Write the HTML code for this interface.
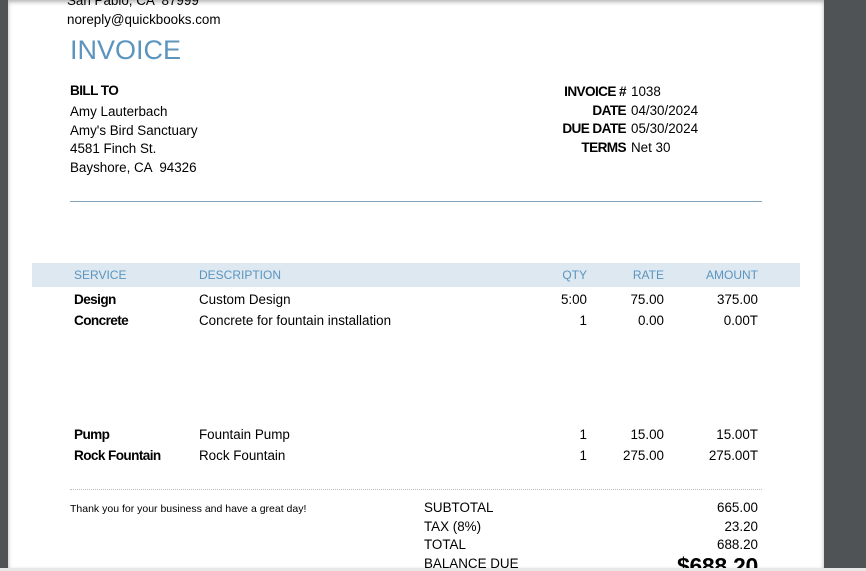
<!DOCTYPE html><html><head><style>
html,body{margin:0;width:866px;height:571px;overflow:hidden}
body{background:#505355;font-family:"Liberation Sans",sans-serif;color:#000;position:relative}
.pg{position:absolute;left:8px;top:0;width:816px;height:568px;background:#fff;box-shadow:0 2px 4px rgba(0,0,0,.3) inset}
.a{position:absolute;white-space:nowrap;font-size:13.4px}
.r{text-align:right}
.b{font-weight:bold;letter-spacing:-0.6px;font-size:13.6px}
.h{color:#5b95bf;font-size:12px}
.bot{position:absolute;left:0;top:568px;width:866px;height:3px;background:#e8e8e8}
</style></head><body>
<div class="pg"></div>
<div class="a" style="left:67px;top:-7px">San Pablo, CA &nbsp;87999</div>
<div class="a" style="left:67px;top:12px">noreply@quickbooks.com</div>
<div class="a" style="left:70px;top:35px;font-size:27px;color:#5b95bf">INVOICE</div>
<div class="a b" style="left:70px;top:83px">BILL TO</div>
<div class="a" style="left:70px;top:103px;line-height:18.5px">Amy Lauterbach<br>Amy's Bird Sanctuary<br>4581 Finch St.<br>Bayshore, CA &nbsp;94326</div>
<div class="a b r" style="left:500px;width:126px;top:83px;line-height:18.5px">INVOICE #<br>DATE<br>DUE DATE<br>TERMS</div>
<div class="a" style="left:631px;top:83px;line-height:18.5px">1038<br>04/30/2024<br>05/30/2024<br>Net 30</div>
<div style="position:absolute;left:70px;top:201px;width:692px;height:1px;background:#8aa5bb"></div>
<div style="position:absolute;left:32px;top:263px;width:768px;height:24px;background:#dde8f0"></div>
<div class="a h" style="left:74px;top:268px">SERVICE</div>
<div class="a h" style="left:199px;top:268px">DESCRIPTION</div>
<div class="a h r" style="left:540px;width:47px;top:268px">QTY</div>
<div class="a h r" style="left:610px;width:54px;top:268px">RATE</div>
<div class="a h r" style="left:680px;width:78px;top:268px">AMOUNT</div>

<div class="a b" style="left:74px;top:292px">Design</div><div class="a" style="left:199px;top:292px">Custom Design</div>
<div class="a r" style="left:540px;width:47px;top:292px">5:00</div><div class="a r" style="left:610px;width:54px;top:292px">75.00</div><div class="a r" style="left:680px;width:78px;top:292px">375.00</div>
<div class="a b" style="left:74px;top:313px">Concrete</div><div class="a" style="left:199px;top:313px">Concrete for fountain installation</div>
<div class="a r" style="left:540px;width:47px;top:313px">1</div><div class="a r" style="left:610px;width:54px;top:313px">0.00</div><div class="a r" style="left:680px;width:78px;top:313px">0.00T</div>
<div class="a b" style="left:74px;top:427px">Pump</div><div class="a" style="left:199px;top:427px">Fountain Pump</div>
<div class="a r" style="left:540px;width:47px;top:427px">1</div><div class="a r" style="left:610px;width:54px;top:427px">15.00</div><div class="a r" style="left:680px;width:78px;top:427px">15.00T</div>
<div class="a b" style="left:74px;top:448px">Rock Fountain</div><div class="a" style="left:199px;top:448px">Rock Fountain</div>
<div class="a r" style="left:540px;width:47px;top:448px">1</div><div class="a r" style="left:610px;width:54px;top:448px">275.00</div><div class="a r" style="left:680px;width:78px;top:448px">275.00T</div>

<div style="position:absolute;left:70px;top:489px;width:692px;border-top:1px dotted #bbb"></div>
<div class="a" style="left:70px;top:503px;font-size:10.5px">Thank you for your business and have a great day!</div>
<div class="a" style="left:424px;top:499px;line-height:18.5px">SUBTOTAL<br>TAX (8%)<br>TOTAL<br>BALANCE DUE</div>
<div class="a r" style="left:660px;width:98px;top:499px;line-height:18.5px">665.00<br>23.20<br>688.20</div>
<div class="a r b" style="left:640px;width:118px;top:553px;font-size:23px;letter-spacing:-0.3px">$688.20</div>
<div class="bot"></div>
</body></html>
